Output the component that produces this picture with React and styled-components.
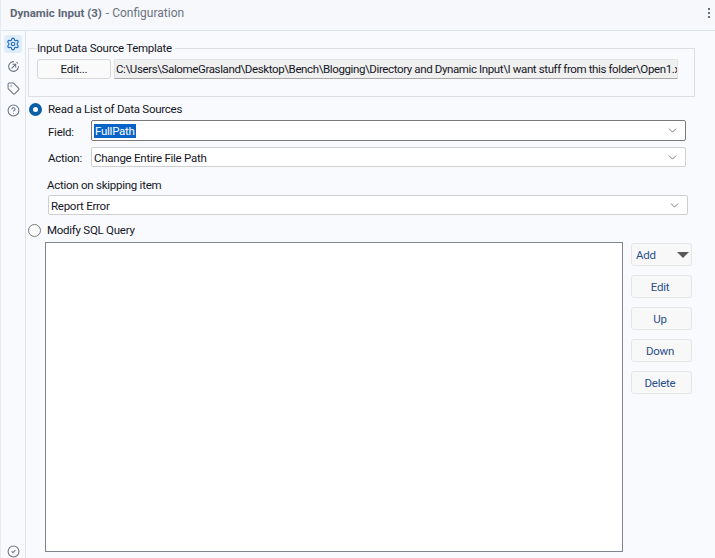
import styled, { createGlobalStyle } from "styled-components";
import { Settings, Tag, CircleHelp, CircleCheck, ChevronDown } from "lucide-react";

const Global = createGlobalStyle`
  html, body { margin: 0; padding: 0; }
  body {
    background: #f9fafe;
    color: #14161f;
    font-family: "Roboto", "Liberation Sans", sans-serif;
    font-size: 11.5px;
    letter-spacing: -0.26px;
  }
`;

const Page = styled.div`
  width: 715px;
  height: 558px;
  overflow: hidden;
  display: flex;
  flex-direction: column;
  border-left: 1px solid #e3ebf7;
  box-sizing: border-box;
`;

const Header = styled.header`
  height: 31px;
  flex: none;
  box-sizing: border-box;
  display: flex;
  align-items: center;
  padding: 0 5px 4px 9px;
  background: #f6f8fc;
  border-bottom: 1px solid #dbe3ef;
  color: #6b7280;
  font-size: 12px;
  letter-spacing: 0;
`;

const Title = styled.span`
  font-size: 11.5px;
  font-weight: 700;
  color: #5f6778;
`;

const Sub = styled.span`
  margin-left: 4px;
  flex: 1;
`;

const Dots = styled.div`
  display: flex;
  flex-direction: column;
  gap: 2px;
  i {
    width: 2px;
    height: 2px;
    background: #5f6f85;
    display: block;
  }
`;

const Body = styled.div`
  flex: 1;
  display: flex;
  min-height: 0;
`;

const Rail = styled.nav`
  width: 25px;
  flex: none;
  box-sizing: border-box;
  border-right: 1px solid #dbe3ef;
  padding: 4px 3px 0;
  display: flex;
  flex-direction: column;
  gap: 4px;
`;

const RailIcon = styled.div`
  width: 18px;
  height: ${(p) => (p.$bottom ? "14px" : "18px")};
  display: flex;
  align-items: center;
  justify-content: center;
  border-radius: 3px;
  background: ${(p) => (p.$active ? "#e1edfb" : "transparent")};
  color: ${(p) => (p.$active ? "#1f6fc0" : "#667080")};
  margin-top: ${(p) => (p.$bottom ? "auto" : "0")};
`;

const Main = styled.main`
  flex: 1;
  min-width: 0;
  padding: 10px 0 0 1px;
  display: flex;
  flex-direction: column;
`;

const Group = styled.fieldset`
  margin: 0 20px 0 1px;
  padding: 0 16px 0 8px;
  border: 1px solid #dcdfe4;
  border-radius: 0;
  height: 56px;
  box-sizing: border-box;
  min-inline-size: 0;
  legend {
    padding: 0 3px 0 0;
    line-height: 14px;
  }
`;

const SourceRow = styled.div`
  display: flex;
  gap: 3px;
  margin-top: 4px;
`;

const FlatButton = styled.button`
  font: inherit;
  letter-spacing: inherit;
  color: #14161f;
  width: 74px;
  height: 20px;
  flex: none;
  padding: 0;
  background: #fafafa;
  border: 1px solid #d8d8d8;
  border-radius: 3px;
`;

const PathBox = styled.div`
  flex: 1;
  min-width: 0;
  height: 20px;
  box-sizing: border-box;
  padding: 2px 0 0 1px;
  background: #f0f0f0;
  border-top: 1px solid #e4e4e4;
  border-left: 1px solid #e4e4e4;
  border-right: 1px solid #e4e4e4;
  border-bottom: 1px solid #a8a8a8;
  overflow: hidden;
  white-space: nowrap;
  letter-spacing: -0.38px;
`;

const RadioRow = styled.label`
  display: flex;
  align-items: center;
  gap: 6px;
  margin: ${(p) => (p.$on ? "5px 0 0 2px" : "8px 0 0 1px")};
  height: 14px;
`;

const RadioDot = styled.span`
  width: 13px;
  height: 13px;
  border-radius: 50%;
  box-sizing: border-box;
  background: ${(p) => (p.$on ? "#fff" : "#fbfbfb")};
  border: ${(p) => (p.$on ? "4px solid #0b5ea8" : "1px solid #7d7d7d")};
  flex: none;
`;

const FieldRow = styled.div`
  display: flex;
  align-items: center;
  margin: ${(p) => p.$top} 0 0 21px;
  label {
    width: 43px;
    flex: none;
    padding-top: 2px;
  }
`;

const Select = styled.div`
  flex: none;
  width: ${(p) => p.$width};
  height: ${(p) => (p.$focus ? "21px" : "20px")};
  box-sizing: border-box;
  display: flex;
  align-items: center;
  justify-content: space-between;
  padding: 2px 6px 0 2px;
  background: #fff;
  border: 1px solid ${(p) => (p.$focus ? "#7a7a7a" : "#cfcfcf")};
  border-radius: 2px;
  svg {
    color: #555;
    margin-top: -2px;
  }
`;

const Selected = styled.span`
  background: #0a64c8;
  color: #fff;
  margin-top: -2px;
  padding: 0 1px;
  line-height: 14px;
`;

const SkipLabel = styled.div`
  margin: 11px 0 3px 20px;
  line-height: 14px;
`;

const SkipSelect = styled(Select)`
  margin-left: 21px;
`;

const QueryArea = styled.div`
  display: flex;
  margin: 5px 0 0 18px;
  gap: 8px;
  flex: 1;
  min-height: 0;
  padding-bottom: 6px;
`;

const QueryBox = styled.div`
  width: 578px;
  box-sizing: border-box;
  background: #fff;
  border: 1px solid #80858f;
`;

const Actions = styled.div`
  width: 61px;
  display: flex;
  flex-direction: column;
  gap: 9px;
  padding-top: 1px;
`;

const ActionButton = styled.button`
  font: inherit;
  letter-spacing: inherit;
  width: 61px;
  height: 23px;
  display: flex;
  align-items: center;
  justify-content: ${(p) => (p.$menu ? "space-between" : "center")};
  padding: ${(p) => (p.$menu ? "0 2px 0 4px" : "0 3px 0 0")};
  background: #f8f8f8;
  border: 1px solid #e6e6e6;
  border-radius: 3px;
  color: #2b4f8a;
`;

const Caret = styled.span`
  width: 0;
  height: 0;
  border-left: 6px solid transparent;
  border-right: 6px solid transparent;
  border-top: 6px solid #5a5a5a;
`;

function OutputIcon() {
  return (
    <svg width="13" height="13" viewBox="0 0 24 24" fill="none" stroke="currentColor" strokeWidth="1.9" strokeLinecap="round" strokeLinejoin="round">
      <path d="M21 12a9 9 0 1 1-9-9" />
      <path d="M9 15l7-7" />
      <path d="M11 8h5v5" />
      <path d="M18 4.5l1.5 1.5" />
    </svg>
  );
}

export default function App() {
  return (
    <Page>
      <Global />
      <Header>
        <Title>Dynamic Input (3)</Title>
        <Sub>- Configuration</Sub>
        <Dots><i /><i /><i /></Dots>
      </Header>
      <Body>
        <Rail>
          <RailIcon $active><Settings size={14} strokeWidth={2} /></RailIcon>
          <RailIcon><OutputIcon /></RailIcon>
          <RailIcon><Tag size={13} strokeWidth={1.9} /></RailIcon>
          <RailIcon><CircleHelp size={13} strokeWidth={1.9} /></RailIcon>
          <RailIcon $bottom><CircleCheck size={13} strokeWidth={1.9} /></RailIcon>
        </Rail>
        <Main>
          <Group>
            <legend>Input Data Source Template</legend>
            <SourceRow>
              <FlatButton>Edit...</FlatButton>
              <PathBox>C:\Users\SalomeGrasland\Desktop\Bench\Blogging\Directory and Dynamic Input\I want stuff from this folder\Open1.xlsx</PathBox>
            </SourceRow>
          </Group>
          <RadioRow $on>
            <RadioDot $on />
            Read a List of Data Sources
          </RadioRow>
          <FieldRow $top="4px">
            <label>Field:</label>
            <Select $width="595px" $focus>
              <Selected>FullPath</Selected>
              <ChevronDown size={13} strokeWidth={1.4} />
            </Select>
          </FieldRow>
          <FieldRow $top="6px">
            <label>Action:</label>
            <Select $width="595px">
              Change Entire File Path
              <ChevronDown size={13} strokeWidth={1.4} />
            </Select>
          </FieldRow>
          <SkipLabel>Action on skipping item</SkipLabel>
          <SkipSelect $width="640px">
            Report Error
            <ChevronDown size={13} strokeWidth={1.4} />
          </SkipSelect>
          <RadioRow>
            <RadioDot />
            Modify SQL Query
          </RadioRow>
          <QueryArea>
            <QueryBox />
            <Actions>
              <ActionButton $menu>Add<Caret /></ActionButton>
              <ActionButton>Edit</ActionButton>
              <ActionButton>Up</ActionButton>
              <ActionButton>Down</ActionButton>
              <ActionButton>Delete</ActionButton>
            </Actions>
          </QueryArea>
        </Main>
      </Body>
    </Page>
  );
}
